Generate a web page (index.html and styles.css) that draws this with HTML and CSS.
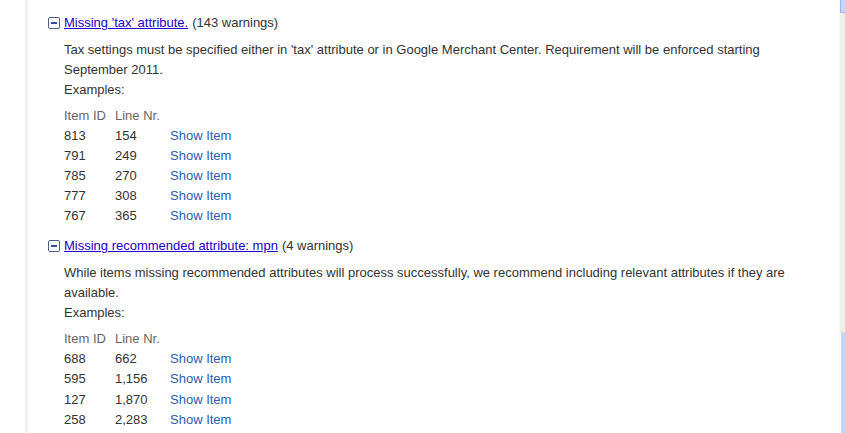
FILE: index.html
```html
<!DOCTYPE html>
<html>
<head>
<meta charset="utf-8">
<link rel="stylesheet" href="styles.css">
</head>
<body>
<div class="page">
  <div class="content">
    <div class="issue">
      <div class="issue-head">
        <span class="toggle"><span class="bar"></span></span>
        <a class="issue-link" href="#">Missing 'tax' attribute.</a>
        <span class="count">(143 warnings)</span>
      </div>
      <div class="issue-body">
        <p class="desc">Tax settings must be specified either in 'tax' attribute or in Google Merchant Center. Requirement will be enforced starting September 2011.</p>
        <p class="examples">Examples:</p>
        <table class="items">
          <tr class="hdr"><td class="c1">Item ID</td><td class="c2">Line Nr.</td><td></td></tr>
          <tr><td>813</td><td>154</td><td><a class="show" href="#">Show Item</a></td></tr>
          <tr><td>791</td><td>249</td><td><a class="show" href="#">Show Item</a></td></tr>
          <tr><td>785</td><td>270</td><td><a class="show" href="#">Show Item</a></td></tr>
          <tr><td>777</td><td>308</td><td><a class="show" href="#">Show Item</a></td></tr>
          <tr><td>767</td><td>365</td><td><a class="show" href="#">Show Item</a></td></tr>
        </table>
      </div>
    </div>
    <div class="issue second">
      <div class="issue-head">
        <span class="toggle"><span class="bar"></span></span>
        <a class="issue-link" href="#">Missing recommended attribute: mpn</a>
        <span class="count">(4 warnings)</span>
      </div>
      <div class="issue-body">
        <p class="desc">While items missing recommended attributes will process successfully, we recommend including relevant attributes if they are available.</p>
        <p class="examples">Examples:</p>
        <table class="items">
          <tr class="hdr"><td class="c1">Item ID</td><td class="c2">Line Nr.</td><td></td></tr>
          <tr><td>688</td><td>662</td><td><a class="show" href="#">Show Item</a></td></tr>
          <tr><td>595</td><td>1,156</td><td><a class="show" href="#">Show Item</a></td></tr>
          <tr class="tall"><td>127</td><td>1,870</td><td><a class="show" href="#">Show Item</a></td></tr>
          <tr><td>258</td><td>2,283</td><td><a class="show" href="#">Show Item</a></td></tr>
        </table>
      </div>
    </div>
  </div>
  <div class="scrollbar">
    <div class="sb-btn"></div>
    <div class="sb-track"></div>
    <div class="sb-thumb"></div>
  </div>
</div>
</body>
</html>
```
FILE: styles.css
```css
html, body {
  margin: 0;
  padding: 0;
  background: #ffffff;
  height: 100%;
  overflow: hidden;
}
body {
  font-family: "Liberation Sans", Arial, sans-serif;
  font-size: 13px;
  color: #333333;
}
.page {
  display: flex;
  height: 433px;
}
.content {
  flex: 1;
  margin-left: 25px;
  border-left: 3px solid #eef0f8;
  padding: 13px 0 0 20px;
}
.issue.second {
  margin-top: 10px;
}
.issue-head {
  display: flex;
  align-items: center;
  height: 20px;
  line-height: 20px;
}
.toggle {
  box-sizing: border-box;
  width: 12px;
  height: 12px;
  border: 1px solid #4a5f8c;
  border-radius: 2px;
  background: #ffffff;
  display: flex;
  align-items: center;
  justify-content: center;
  margin-right: 4px;
}
.toggle .bar {
  width: 6px;
  height: 2px;
  background: #2a4ea8;
}
.issue-link {
  color: #2200cc;
  text-decoration: underline;
}
.count {
  margin-left: 4px;
  color: #333333;
}
.issue-body {
  padding-left: 16px;
  padding-top: 7px;
}
.desc, .examples {
  margin: 0;
  line-height: 20px;
  width: 740px;
}
.items {
  border-collapse: collapse;
  margin-top: 6px;
}
.items td {
  padding: 0;
  height: 20px;
  line-height: 20px;
  vertical-align: middle;
}
.items .tall td {
  height: 21px;
  line-height: 21px;
}
.items .c1 { width: 51px; }
.items .c2 { width: 55px; }
.items .hdr td { color: #666666; }
.show {
  color: #2a5db0;
  text-decoration: none;
}
.scrollbar {
  width: 5px;
  display: flex;
  flex-direction: column;
  background: #f1efe6;
  border-left: 1px solid #f8f7f2;
}
.sb-btn {
  height: 12px;
  background: #c5d6fc;
  border-left: 1px solid #9fb4e6;
  border-bottom: 1px solid #9fb4e6;
}
.sb-track {
  height: 319px;
}
.sb-thumb {
  flex: 1;
  background: #c3d5fd;
  border-top: 1px solid #d6d9e0;
  border-left: 1px solid #ffffff;
}
```
